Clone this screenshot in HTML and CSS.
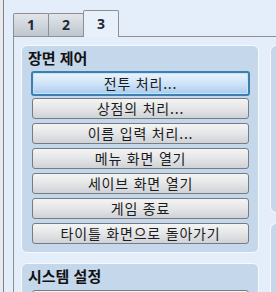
FILE: index.html
```html
<!DOCTYPE html>
<html lang="ko">
<head>
  <meta charset="UTF-8">
  <title>장면 제어</title>
  <link rel="stylesheet" href="styles.css">
</head>
<body>
  <div class="window">
    <div class="behind"></div>

    <div class="tabview">
      <div class="tabbar">
        <div class="tab">1</div>
        <div class="tab">2</div>
        <div class="tab active">3</div>
      </div>

      <div class="panel">
        <div class="column">
          <div class="group">
            <h3>장면 제어</h3>
            <button class="focused">전투 처리...</button>
            <button>상점의 처리...</button>
            <button>이름 입력 처리...</button>
            <button>메뉴 화면 열기</button>
            <button>세이브 화면 열기</button>
            <button>게임 종료</button>
            <button>타이틀 화면으로 돌아가기</button>
          </div>

          <div class="group">
            <h3>시스템 설정</h3>
            <button>&nbsp;</button>
          </div>
        </div>

        <div class="column side">
          <div class="group tall"></div>
          <div class="group"></div>
        </div>
      </div>
    </div>
  </div>
</body>
</html>
```

FILE: styles.css
```css
html, body {
  margin: 0;
  padding: 0;
  width: 276px;
  height: 292px;
  overflow: hidden;
  background-color: #e4eefa;
  font-family: 'Noto Sans CJK KR', 'Noto Sans', sans-serif;
  color: #1b1b1b;
}

.window {
  display: flex;
  height: 292px;
  overflow: hidden;
}

.behind {
  width: 3px;
  margin-right: 9px;
  background-color: #e9eaec;
  border-right: 1px solid #7d8288;
  flex-shrink: 0;
}

.tabview {
  flex: 1;
  display: flex;
  flex-direction: column;
  min-width: 0;
  overflow: hidden;
}

.tabbar {
  display: flex;
  align-items: flex-end;
  height: 36px;
  flex-shrink: 0;
}

.tab {
  width: 34px;
  height: 22px;
  border: 1px solid #8b9097;
  border-bottom: none;
  border-radius: 2px 2px 0 0;
  background: linear-gradient(#e2e6eb, #bec5cd);
  text-align: center;
  font-family: 'Noto Sans', sans-serif;
  font-size: 14px;
  font-weight: bold;
  line-height: 22px;
  color: #1e2a38;
  margin-right: -1px;
}

.tab.active {
  height: 25px;
  line-height: 26px;
  background: #e8f1fb;
  position: relative;
  z-index: 1;
  margin-bottom: -1px;
  padding-bottom: 1px;
}

.panel {
  flex: 1;
  display: flex;
  gap: 11px;
  padding: 8px 0 0 7px;
  border-top: 1px solid #8b9097;
  border-left: 1px solid #8b9097;
  background-color: #e4eefa;
  overflow: hidden;
  min-height: 0;
}

.column {
  display: flex;
  flex-direction: column;
  gap: 10px;
  width: 238px;
  flex-shrink: 0;
}

.column.side {
  flex: 1;
  width: auto;
  min-width: 0;
}

.group {
  background-color: #c5d7eb;
  border: 1px solid #f7fafd;
  border-radius: 6px;
  padding: 0 9px 8px 10px;
  display: flex;
  flex-direction: column;
  gap: 4px;
  flex-shrink: 0;
}

.side .group {
  border-right: none;
  border-radius: 6px 0 0 6px;
  padding: 0;
}

.group.tall {
  height: 166px;
}

.side .group + .group {
  height: 80px;
}

.group h3 {
  margin: 0 0 0 -4px;
  padding: 2px 0 0 0;
  font-size: 15px;
  font-weight: bold;
  line-height: 20px;
  color: #111111;
}

button {
  height: 21px;
  padding: 0;
  border: 1px solid #777c83;
  border-radius: 3px;
  background: linear-gradient(#f4f4f4, #e6e7e9 45%, #cfd2d6);
  font-family: 'Noto Sans CJK KR', 'Noto Sans', sans-serif;
  font-size: 14px;
  letter-spacing: 0.8px;
  line-height: 19px;
  color: #1b1b1b;
  flex-shrink: 0;
}

button.focused {
  border: 2px solid #3d7fb2;
  height: 25px;
  margin: -1px -1px -2px -1px;
  background: linear-gradient(#eaf4fd, #cfe4f8 50%, #a9cbee);
  box-shadow: inset 0 0 0 1px #c9e2f7;
}
```
